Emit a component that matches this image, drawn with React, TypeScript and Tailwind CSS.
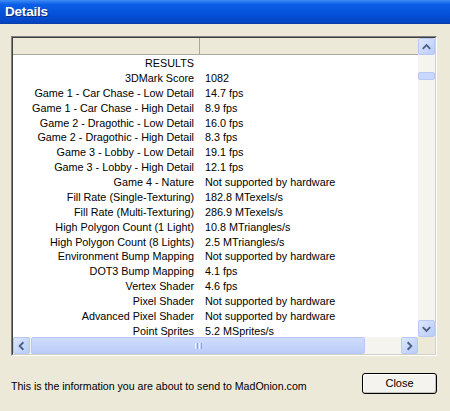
import React from "react";

const rows: [string, string][] = [
  ["RESULTS", ""],
  ["3DMark Score", "1082"],
  ["Game 1 - Car Chase - Low Detail", "14.7 fps"],
  ["Game 1 - Car Chase - High Detail", "8.9 fps"],
  ["Game 2 - Dragothic - Low Detail", "16.0 fps"],
  ["Game 2 - Dragothic - High Detail", "8.3 fps"],
  ["Game 3 - Lobby - Low Detail", "19.1 fps"],
  ["Game 3 - Lobby - High Detail", "12.1 fps"],
  ["Game 4 - Nature", "Not supported by hardware"],
  ["Fill Rate (Single-Texturing)", "182.8 MTexels/s"],
  ["Fill Rate (Multi-Texturing)", "286.9 MTexels/s"],
  ["High Polygon Count (1 Light)", "10.8 MTriangles/s"],
  ["High Polygon Count (8 Lights)", "2.5 MTriangles/s"],
  ["Environment Bump Mapping", "Not supported by hardware"],
  ["DOT3 Bump Mapping", "4.1 fps"],
  ["Vertex Shader", "4.6 fps"],
  ["Pixel Shader", "Not supported by hardware"],
  ["Advanced Pixel Shader", "Not supported by hardware"],
  ["Point Sprites", "5.2 MSprites/s"],
];

function ArrowButton({ dir }: { dir: "up" | "down" | "left" | "right" }) {
  const paths = {
    up: "M4 10 L8 6 L12 10",
    down: "M4 6 L8 10 L12 6",
    left: "M10 4 L6 8 L10 12",
    right: "M6 4 L10 8 L6 12",
  };
  return (
    <div className="w-[17px] h-[17px] rounded-[2px] border border-[#B7C8F5] bg-[linear-gradient(135deg,#DCE6FE,#B9CCF8)] flex items-center justify-center">
      <svg width="16" height="16" viewBox="0 0 16 16">
        <path d={paths[dir]} fill="none" stroke="#4D6185" strokeWidth="2" />
      </svg>
    </div>
  );
}

export default function App() {
  return (
    <div
      className="w-[450px] h-[411px] bg-[#ECE9D8] flex flex-col overflow-hidden"
      style={{ fontFamily: '"Liberation Sans", Arial, sans-serif' }}
    >
      <div className="h-[24px] shrink-0 bg-[linear-gradient(180deg,#3F8DF5_0%,#0B5FE6_18%,#0451D8_60%,#0446C6_90%,#0A3CA8_100%)] flex items-center pl-[5px]">
        <span className="text-white font-bold text-[13.5px] tracking-[-0.2px] [text-shadow:1px_1px_0_#0A2A7A]">
          Details
        </span>
      </div>

      <div className="mt-[12px] ml-[11px] w-[426px] h-[320px] border-t border-l border-[#808080] border-r-white border-b-white border-r border-b">
        <div className="w-full h-full border-t border-l border-[#404040] border-r border-b border-r-[#D4D0C8] border-b-[#D4D0C8] flex flex-col">
          <div className="flex flex-1 min-h-0">
            <div className="flex-1 bg-white flex flex-col overflow-hidden">
              <div className="h-[17px] shrink-0 flex bg-[#ECE9D8] border-b border-[#ACA899]">
                <div className="w-[187px] border-r border-[#ACA899]" />
                <div className="flex-1" />
              </div>
              <div className="pt-[1px]">
                {rows.map(([label, value]) => (
                  <div key={label} className="h-[14.88px] flex items-center text-[10.8px] text-black leading-none">
                    <div className="w-[187px] text-right pr-[6px] whitespace-nowrap">{label}</div>
                    <div className="pl-[5px] whitespace-nowrap">{value}</div>
                  </div>
                ))}
              </div>
            </div>
            <div className="w-[17px] bg-[#F5F4EF] flex flex-col">
              <ArrowButton dir="up" />
              <div className="flex-1 pt-[17px]">
                <div className="h-[8px] rounded-[2px] border border-[#B7C8F5] bg-[#C9D8FC]" />
              </div>
              <ArrowButton dir="down" />
            </div>
          </div>
          <div className="h-[17px] shrink-0 flex">
            <div className="flex-1 flex bg-[#F5F4EF]">
              <ArrowButton dir="left" />
              <div className="flex-1 flex">
                <div className="w-[334px] ml-[1px] rounded-[2px] border border-[#B7C8F5] bg-[linear-gradient(180deg,#CFDCFD,#BACDF9)] flex items-center justify-center">
                  <div className="flex gap-[1px]">
                    <div className="w-[1px] h-[6px] bg-[#EEF3FF]" />
                    <div className="w-[1px] h-[6px] bg-[#8CA4E4]" />
                    <div className="w-[1px] h-[6px] bg-[#EEF3FF]" />
                    <div className="w-[1px] h-[6px] bg-[#8CA4E4]" />
                  </div>
                </div>
              </div>
              <ArrowButton dir="right" />
            </div>
            <div className="w-[17px] bg-[#ECE9D8]" />
          </div>
        </div>
      </div>

      <div className="flex items-center justify-between mt-[16px] pl-[11px] pr-[13px]">
        <span className="text-[10.6px] text-black mt-[7px]">
          This is the information you are about to send to MadOnion.com
        </span>
        <button className="w-[75px] h-[21px] rounded-[3px] border border-black bg-[#F4F3EE] text-[11px] text-black shadow-[inset_-1px_-1px_0_#C4C1B0,inset_1px_1px_0_#ffffff]">
          Close
        </button>
      </div>
    </div>
  );
}
